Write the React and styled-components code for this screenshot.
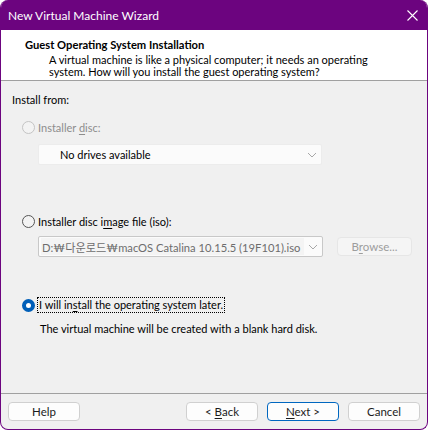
import React from 'react';
import styled, { createGlobalStyle, css } from 'styled-components';

const PURPLE = '#6c047f';

const GlobalStyle = createGlobalStyle`
  html, body {
    margin: 0;
    padding: 0;
    background: #ffffff;
  }
  body {
    font-family: Lato, "Noto Sans CJK KR", sans-serif;
    font-size: 11px;
    color: #000;
  }
  * { box-sizing: border-box; }
`;

const Window = styled.div`
  width: 428px;
  height: 430px;
  display: flex;
  flex-direction: column;
  border: 1px solid ${PURPLE};
  border-top: none;
  border-radius: 8px;
  overflow: hidden;
  background: #f0f0f0;
`;

const TitleBar = styled.div`
  height: 30px;
  flex: none;
  display: flex;
  align-items: center;
  justify-content: space-between;
  padding: 0 10px 0 8px;
  background: ${PURPLE};
  color: #fff;
  font-size: 12px;
  margin: 0 -1px;
`;

const Header = styled.div`
  height: 51px;
  flex: none;
  background: #fff;
  border-bottom: 1px solid #a0a0a0;
  padding: 7px 0 0 24px;
`;

const HeaderTitle = styled.div`
  font-weight: 700;
  font-size: 11.2px;
  line-height: 15px;
`;

const HeaderText = styled.div`
  margin: 2px 0 0 24px;
  line-height: 11.5px;
  white-space: nowrap;
`;

const Content = styled.div`
  flex: 1;
  padding: 11px 0 0 11px;
`;

const Label = styled.div`
  line-height: 15px;
  color: ${(p) => (p.$disabled ? '#8d8d8d' : '#000')};
  margin: ${(p) => p.$margin || '0'};
`;

const RadioRow = styled.div`
  display: flex;
  align-items: center;
  gap: 3px;
  margin: ${(p) => p.$margin};
  padding-left: 10px;
  line-height: 15px;
  color: ${(p) => (p.$disabled ? '#8d8d8d' : '#000')};
`;

const RadioCircle = styled.span`
  width: 13px;
  height: 13px;
  border-radius: 50%;
  flex: none;
  ${(p) =>
    p.$checked
      ? css`
          background: #fff;
          border: 4px solid #005fb8;
        `
      : p.$disabled
      ? css`
          background: #f3f3f3;
          border: 1px solid #c4c4c4;
        `
      : css`
          background: #f3f3f3;
          border: 1px solid #555;
        `}
`;

const FocusText = styled.span`
  border: 1px dotted #000;
  padding: 0 1px;
  line-height: 14px;
  margin-left: -1px;
`;

const U = styled.span`
  text-decoration: underline;
  text-underline-offset: 2px;
`;

const Combo = styled.div`
  width: 284px;
  height: 21px;
  display: flex;
  align-items: center;
  justify-content: space-between;
  padding: 0 4px 0 21px;
  margin: ${(p) => p.$margin};
  margin-left: 26px;
  background: #fbfbfb;
  border: 1px solid #ececec;
  border-radius: 2px;
`;

const ComboRow = styled.div`
  display: flex;
  align-items: center;
  gap: 14px;
  margin: 7px 0 0 26px;
`;

const FileCombo = styled.div`
  width: 285px;
  height: 21px;
  display: flex;
  align-items: center;
  padding: 1px 4px 1px 2px;
  background: #fbfbfb;
  border: 1px solid #c8c8c8;
  border-radius: 2px;
  gap: 4px;
`;

const FileText = styled.div`
  flex: 1;
  height: 100%;
  display: flex;
  align-items: center;
  padding-left: 1px;
  background: #f4f4f4;
  color: #6d6d6d;
  white-space: nowrap;
  overflow: hidden;
  font-size: 11.2px;
`;

const Button = styled.button`
  width: ${(p) => p.$width || '72px'};
  height: 19px;
  padding: 0;
  font-family: inherit;
  font-size: 11.5px;
  line-height: 15px;
  border-radius: 4px;
  background: ${(p) => (p.$disabled ? '#f5f5f5' : '#fdfdfd')};
  color: ${(p) => (p.$disabled ? '#9d9d9d' : '#1b1b1b')};
  border: 1px solid
    ${(p) => (p.$primary ? '#0067c0' : p.$disabled ? '#e6e6e6' : '#d0d0d0')};
`;

const Hint = styled.div`
  line-height: 15px;
  margin: 8px 0 0 28px;
`;

const Footer = styled.div`
  height: 36px;
  flex: none;
  border-top: 1px solid #a0a0a0;
  display: flex;
  justify-content: space-between;
  padding: 8px 7px 0 7px;
`;

const ButtonGroup = styled.div`
  display: flex;
  gap: 9px;
`;

function Chevron() {
  return (
    <svg width="10" height="6" viewBox="0 0 10 6">
      <path d="M1 1 L5 5 L9 1" fill="none" stroke="#a8a8a8" strokeWidth="1" />
    </svg>
  );
}

function CloseIcon() {
  return (
    <svg width="11" height="11" viewBox="0 0 11 11">
      <path d="M0.5 0.5 L10.5 10.5 M10.5 0.5 L0.5 10.5" stroke="#fff" strokeWidth="1.1" />
    </svg>
  );
}

export default function App() {
  return (
    <>
      <GlobalStyle />
      <Window>
        <TitleBar>
          <span>New Virtual Machine Wizard</span>
          <CloseIcon />
        </TitleBar>
        <Header>
          <HeaderTitle>Guest Operating System Installation</HeaderTitle>
          <HeaderText>
            A virtual machine is like a physical computer; it needs an operating
            <br />
            system. How will you install the guest operating system?
          </HeaderText>
        </Header>
        <Content>
          <Label>Install from:</Label>
          <RadioRow $disabled $margin="13px 0 0 0">
            <RadioCircle $disabled />
            <span>
              Installer <U>d</U>isc:
            </span>
          </RadioRow>
          <Combo $margin="9px 0 0 0">
            <span>No drives available</span>
            <Chevron />
          </Combo>
          <RadioRow $margin="49px 0 0 0">
            <RadioCircle />
            <span>
              Installer disc i<U>m</U>age file (iso):
            </span>
          </RadioRow>
          <ComboRow>
            <FileCombo>
              <FileText>D:₩다운로드₩macOS Catalina 10.15.5 (19F101).iso</FileText>
              <Chevron />
            </FileCombo>
            <Button $disabled $width="75px">
              B<U>r</U>owse...
            </Button>
          </ComboRow>
          <RadioRow $margin="40px 0 0 0">
            <RadioCircle $checked />
            <FocusText>
              I will in<U>s</U>tall the operating system later.
            </FocusText>
          </RadioRow>
          <Hint>The virtual machine will be created with a blank hard disk.</Hint>
        </Content>
        <Footer>
          <Button>Help</Button>
          <ButtonGroup>
            <Button>
              &lt; <U>B</U>ack
            </Button>
            <Button $primary>
              <U>N</U>ext &gt;
            </Button>
            <Button>Cancel</Button>
          </ButtonGroup>
        </Footer>
      </Window>
    </>
  );
}
